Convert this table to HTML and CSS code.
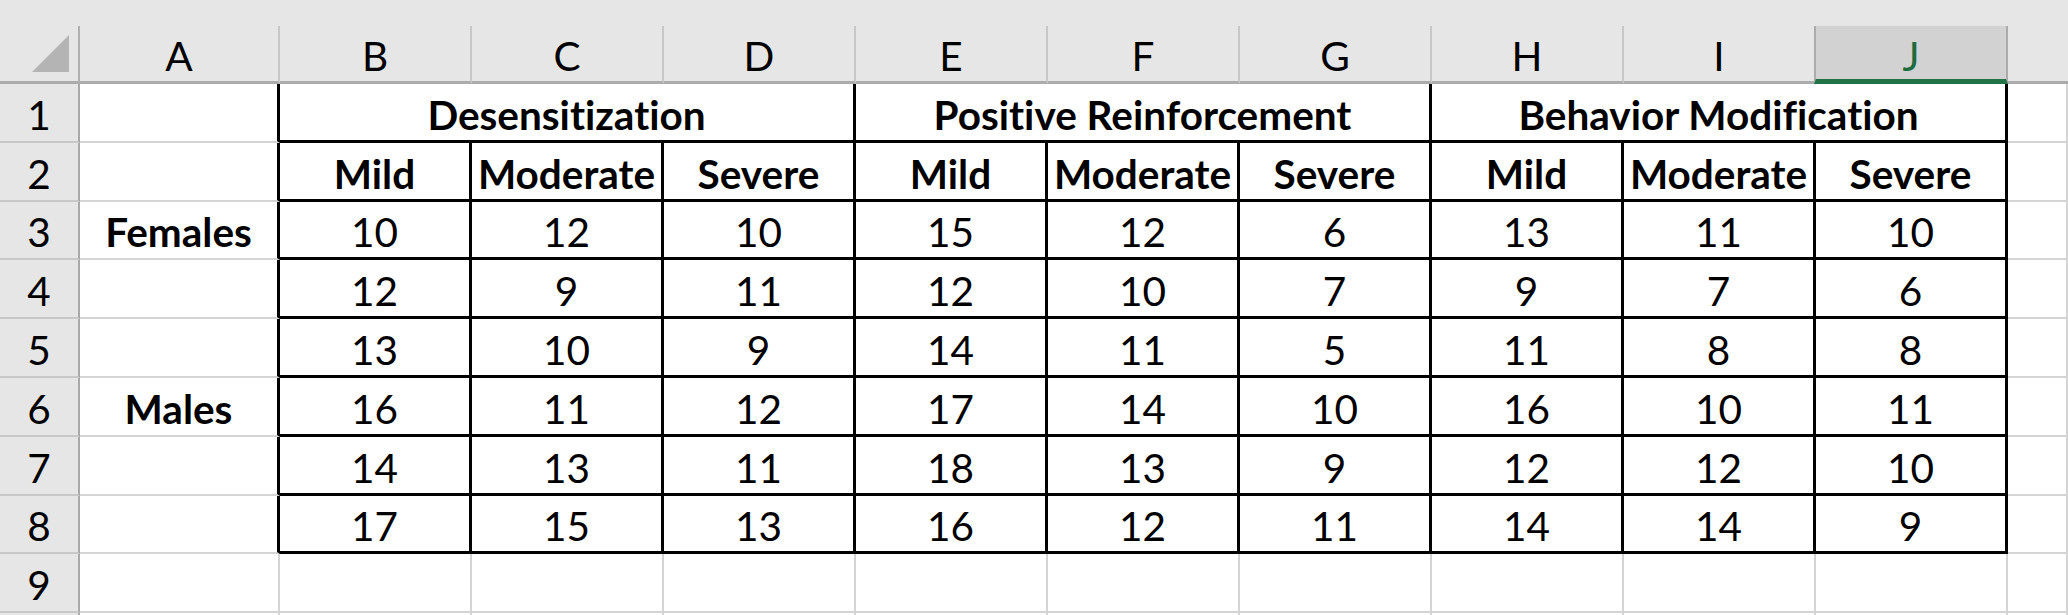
FILE: index.html
```html
<!DOCTYPE html>
<html>
<head>
<meta charset="utf-8">
<link rel="stylesheet" href="styles.css">
</head>
<body>
<div class="sheet">
  <div class="strip"></div>
  <div class="grid">
    <div class="corner"><svg class="tri" width="37" height="37" viewBox="0 0 37 37"><polygon points="0,37 37,0 37,37" fill="#b4b4b4"/></svg></div>
    <div class="ch">A</div><div class="ch">B</div><div class="ch">C</div><div class="ch">D</div><div class="ch">E</div><div class="ch">F</div><div class="ch">G</div><div class="ch">H</div><div class="ch">I</div><div class="ch sel">J</div><div class="ch last"></div>

    <div class="rh">1</div><div class="c ta"></div>
    <div class="c t b span3">Desensitization</div><div class="c t b span3">Positive Reinforcement</div><div class="c t b span3">Behavior Modification</div><div class="c"></div>

    <div class="rh">2</div><div class="c ta"></div>
    <div class="c t b">Mild</div><div class="c t b">Moderate</div><div class="c t b">Severe</div>
    <div class="c t b">Mild</div><div class="c t b">Moderate</div><div class="c t b">Severe</div>
    <div class="c t b">Mild</div><div class="c t b">Moderate</div><div class="c t b">Severe</div><div class="c"></div>

    <div class="rh">3</div><div class="c ta b">Females</div>
    <div class="c t">10</div><div class="c t">12</div><div class="c t">10</div><div class="c t">15</div><div class="c t">12</div><div class="c t">6</div><div class="c t">13</div><div class="c t">11</div><div class="c t">10</div><div class="c"></div>

    <div class="rh">4</div><div class="c ta"></div>
    <div class="c t">12</div><div class="c t">9</div><div class="c t">11</div><div class="c t">12</div><div class="c t">10</div><div class="c t">7</div><div class="c t">9</div><div class="c t">7</div><div class="c t">6</div><div class="c"></div>

    <div class="rh">5</div><div class="c ta"></div>
    <div class="c t">13</div><div class="c t">10</div><div class="c t">9</div><div class="c t">14</div><div class="c t">11</div><div class="c t">5</div><div class="c t">11</div><div class="c t">8</div><div class="c t">8</div><div class="c"></div>

    <div class="rh">6</div><div class="c ta b">Males</div>
    <div class="c t">16</div><div class="c t">11</div><div class="c t">12</div><div class="c t">17</div><div class="c t">14</div><div class="c t">10</div><div class="c t">16</div><div class="c t">10</div><div class="c t">11</div><div class="c"></div>

    <div class="rh">7</div><div class="c ta"></div>
    <div class="c t">14</div><div class="c t">13</div><div class="c t">11</div><div class="c t">18</div><div class="c t">13</div><div class="c t">9</div><div class="c t">12</div><div class="c t">12</div><div class="c t">10</div><div class="c"></div>

    <div class="rh">8</div><div class="c ta"></div>
    <div class="c t">17</div><div class="c t">15</div><div class="c t">13</div><div class="c t">16</div><div class="c t">12</div><div class="c t">11</div><div class="c t">14</div><div class="c t">14</div><div class="c t">9</div><div class="c"></div>

    <div class="rh">9</div><div class="c"></div>
    <div class="c"></div><div class="c"></div><div class="c"></div><div class="c"></div><div class="c"></div><div class="c"></div><div class="c"></div><div class="c"></div><div class="c"></div><div class="c"></div>

    <div class="rh"></div><div class="c"></div>
    <div class="c"></div><div class="c"></div><div class="c"></div><div class="c"></div><div class="c"></div><div class="c"></div><div class="c"></div><div class="c"></div><div class="c"></div><div class="c"></div>
  </div>
</div>
</body>
</html>
```
FILE: styles.css
```css
html, body {
  margin: 0;
  padding: 0;
  background: #ffffff;
  overflow: hidden;
}

.sheet {
  width: 2068px;
  height: 615px;
  overflow: hidden;
  font-family: "Lato", "Carlito", "Liberation Sans", sans-serif;
  font-size: 40.5px;
  line-height: 1.2;
  color: #000;
  font-variant-ligatures: none;
  font-feature-settings: "liga" 0, "clig" 0, "dlig" 0;
}

.strip {
  height: 26px;
  background: #e6e6e6;
}

.grid {
  display: grid;
  grid-template-columns: 80px 200px repeat(9, 192px) 1fr;
  grid-template-rows: 58px 59px 59px 58px 59px 59px 59px 59px 58px 59px 59px;
}

.corner,
.ch,
.rh,
.c {
  box-sizing: border-box;
  display: flex;
  align-items: flex-end;
  justify-content: center;
  white-space: nowrap;
  overflow: hidden;
}

.corner {
  background: #e6e6e6;
  border-right: 2px solid #b0b0b0;
  border-bottom: 3px solid #ababab;
  justify-content: flex-end;
  padding: 0 9px 9px 0;
}

.tri {
  display: block;
}

.ch {
  background: #e6e6e6;
  border-right: 2px solid #c8c8c8;
  border-bottom: 3px solid #ababab;
  padding-bottom: 0;
}

.ch.last {
  border-right: none;
}

.ch.sel {
  background: #d2d2d2;
  color: #1d6b41;
  border-left: 2px solid #ababab;
  border-right: 2px solid #ababab;
  border-bottom: 5px solid #217346;
  margin-left: -2px;
  padding-bottom: 0;
  line-height: 1.1;
}

.rh {
  background: #e6e6e6;
  border-right: 2px solid #a9a9a9;
  border-bottom: 2px solid #c8c8c8;
  padding-bottom: 1px;
}

.c {
  border-right: 2px solid #d4d4d4;
  border-bottom: 2px solid #d4d4d4;
  padding-bottom: 1px;
}

.c.ta {
  border-right: 3px solid #000;
}

.c.t {
  border-right: 3px solid #000;
  border-bottom: 3px solid #000;
  padding-bottom: 0;
}

.b {
  font-weight: 700;
}

.span3 {
  grid-column: span 3;
}
```
